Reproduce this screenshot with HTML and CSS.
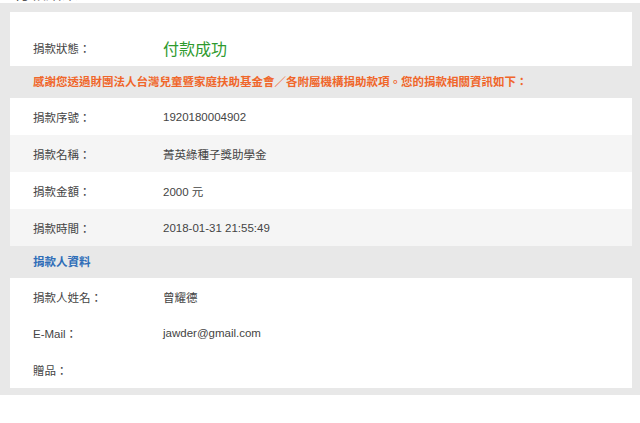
FILE: index.html
```html
<!DOCTYPE html>
<html lang="zh-Hant">
<head>
    <meta charset="UTF-8">
    <meta name="viewport" content="width=device-width, initial-scale=1.0">
    <title>捐款結果</title>
    <link rel="stylesheet" href="styles.css">
</head>
<body>
    <h2 class="page-title">付款結果</h2>
    <div class="panel">
        <div class="box">
            <div class="row row-status">
                <span class="label">捐款狀態：</span>
                <span class="status-ok">付款成功</span>
            </div>
            <div class="notice">感謝您透過財團法人台灣兒童暨家庭扶助基金會／各附屬機構捐助款項。您的捐款相關資訊如下：</div>
            <div class="row">
                <span class="label">捐款序號：</span>
                <span class="value">1920180004902</span>
            </div>
            <div class="row row-alt">
                <span class="label">捐款名稱：</span>
                <span class="value">菁英綠種子獎助學金</span>
            </div>
            <div class="row">
                <span class="label">捐款金額：</span>
                <span class="value">2000 元</span>
            </div>
            <div class="row row-alt">
                <span class="label">捐款時間：</span>
                <span class="value">2018-01-31 21:55:49</span>
            </div>
            <div class="section-head">捐款人資料</div>
            <div class="donor">
                <div class="row row-donor">
                    <span class="label">捐款人姓名：</span>
                    <span class="value">曾耀德</span>
                </div>
                <div class="row row-donor">
                    <span class="label">E-Mail：</span>
                    <span class="value">jawder@gmail.com</span>
                </div>
                <div class="row row-donor">
                    <span class="label">贈品：</span>
                    <span class="value"></span>
                </div>
            </div>
        </div>
    </div>
</body>
</html>
```

FILE: styles.css
```css
body {
    margin: 0;
    background-color: #fff;
    color: #444;
    font-family: "Liberation Sans", Arial, "Noto Sans CJK TC", sans-serif;
    font-size: 11.5px;
    overflow: hidden;
}
.page-title {
    margin: -15px 0 0 14px;
    height: 18px;
    font-size: 16px;
    line-height: 18px;
    font-weight: normal;
    color: #555;
}
.panel {
    background-color: #e8e8e8;
    padding: 9px 8px 7px 10px;
}
.box {
    background-color: #fff;
}
.row {
    display: flex;
    align-items: center;
    height: 37px;
    padding-left: 23px;
}
.row-alt {
    background-color: #f5f5f5;
}
.label {
    width: 130px;
    flex-shrink: 0;
    color: #444;
}
.value {
    color: #444;
}
.row-status {
    height: 54px;
    padding-top: 17px;
    box-sizing: border-box;
}
.status-ok {
    color: #2e9a2e;
    font-size: 16px;
}
.notice {
    background-color: #e8e8e8;
    color: #f0662a;
    font-weight: bold;
    height: 32px;
    line-height: 32px;
    padding-left: 23px;
}
.section-head {
    background-color: #e8e8e8;
    color: #2e6db8;
    font-weight: bold;
    height: 32px;
    line-height: 32px;
    padding-left: 23px;
}
.donor {
    padding-top: 1px;
}
.row-donor {
    height: 36.3px;
}
```
